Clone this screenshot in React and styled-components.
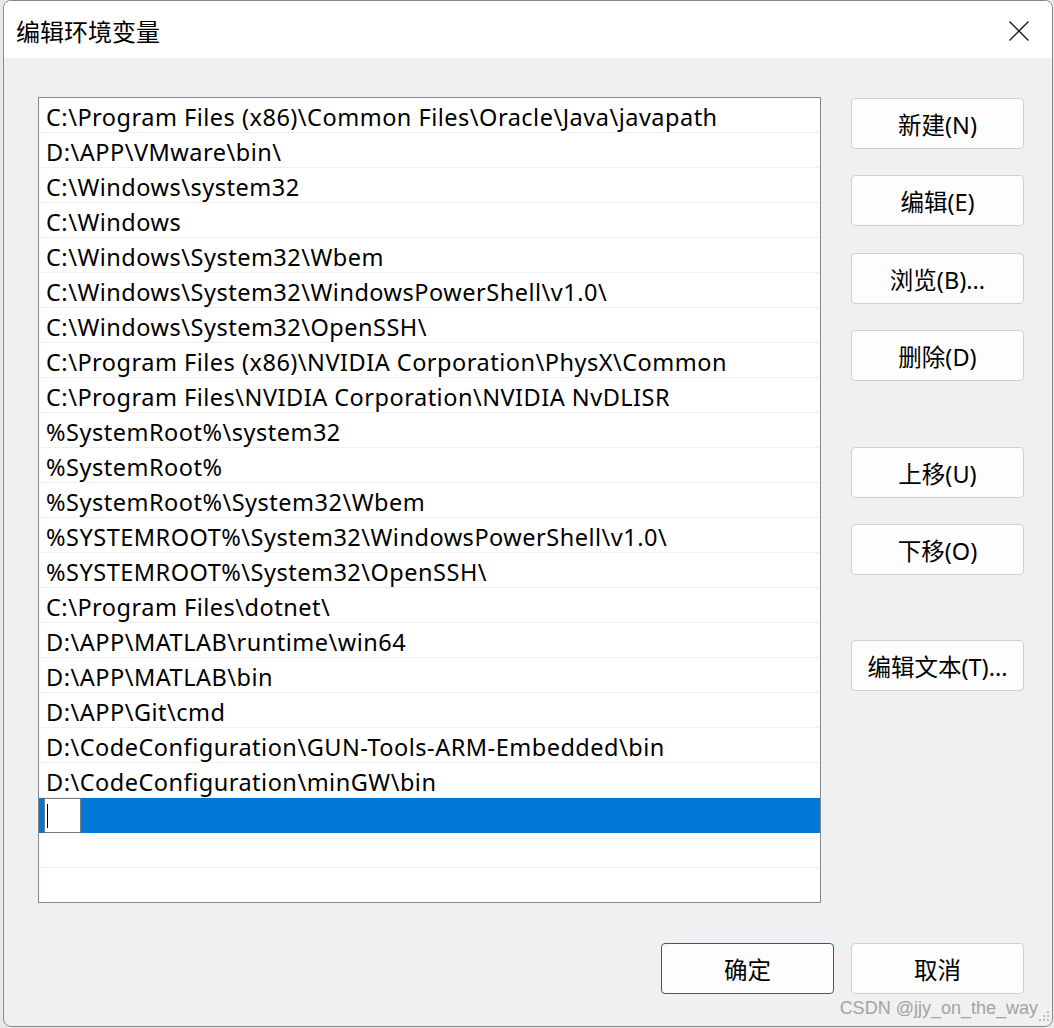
import React from 'react'
import styled, { createGlobalStyle } from 'styled-components'

const GlobalStyle = createGlobalStyle`
  html, body {
    margin: 0;
    padding: 0;
    height: 100%;
    overflow: hidden;
    background: #e9e9e9;
  }
  #root {
    height: 100%;
  }
`

const fonts = {
  ui: `"Noto Sans", "Noto Sans CJK SC", sans-serif`,
  cjk: `"Noto Sans CJK SC", "Noto Sans", sans-serif`,
}

const paths = [
  'C:\\Program Files (x86)\\Common Files\\Oracle\\Java\\javapath',
  'D:\\APP\\VMware\\bin\\',
  'C:\\Windows\\system32',
  'C:\\Windows',
  'C:\\Windows\\System32\\Wbem',
  'C:\\Windows\\System32\\WindowsPowerShell\\v1.0\\',
  'C:\\Windows\\System32\\OpenSSH\\',
  'C:\\Program Files (x86)\\NVIDIA Corporation\\PhysX\\Common',
  'C:\\Program Files\\NVIDIA Corporation\\NVIDIA NvDLISR',
  '%SystemRoot%\\system32',
  '%SystemRoot%',
  '%SystemRoot%\\System32\\Wbem',
  '%SYSTEMROOT%\\System32\\WindowsPowerShell\\v1.0\\',
  '%SYSTEMROOT%\\System32\\OpenSSH\\',
  'C:\\Program Files\\dotnet\\',
  'D:\\APP\\MATLAB\\runtime\\win64',
  'D:\\APP\\MATLAB\\bin',
  'D:\\APP\\Git\\cmd',
  'D:\\CodeConfiguration\\GUN-Tools-ARM-Embedded\\bin',
  'D:\\CodeConfiguration\\minGW\\bin',
]

const sideButtons = [
  { label: '新建(N)', gap: 0 },
  { label: '编辑(E)', gap: 26 },
  { label: '浏览(B)...', gap: 27 },
  { label: '删除(D)', gap: 26 },
  { label: '上移(U)', gap: 66 },
  { label: '下移(O)', gap: 26 },
  { label: '编辑文本(T)...', gap: 65 },
]

const Window = styled.div`
  position: relative;
  box-sizing: border-box;
  margin-left: 3px;
  width: 1050px;
  height: 1027px;
  background: #f0f0f0;
  border: 1px solid #8a8a8a;
  border-radius: 8px;
  overflow: hidden;
  display: flex;
  flex-direction: column;
`

const TitleBar = styled.div`
  height: 57px;
  flex: none;
  background: #ffffff;
  display: flex;
  align-items: center;
  justify-content: space-between;
  padding: 0 22px 0 12px;
`

const Title = styled.div`
  font-family: ${fonts.cjk};
  font-size: 24px;
  color: #000;
  margin-top: 2px;
`

const CloseIcon = styled.svg`
  width: 22px;
  height: 22px;
  display: block;
  margin-top: 2px;
`

const Body = styled.div`
  flex: 1;
  display: flex;
  flex-direction: column;
  padding: 39px 28px 0 34px;
`

const Main = styled.div`
  display: flex;
  gap: 30px;
`

const List = styled.div`
  box-sizing: border-box;
  width: 784px;
  height: 806px;
  border: 1px solid #828790;
  background: #fff;
  display: flex;
  flex-direction: column;
  overflow: hidden;
`

const Row = styled.div`
  flex: none;
  box-sizing: border-box;
  height: 35px;
  display: flex;
  align-items: center;
  padding: 3px 0 0 7px;
  border-bottom: 1px solid ${p => (p.$selected ? '#0078d7' : '#f0f0f0')};
  font-family: ${fonts.ui};
  font-size: 23.5px;
  letter-spacing: 0.5px;
  color: #000;
  white-space: nowrap;
  background: ${p => (p.$selected ? '#0078d7' : '#fff')};
`

const EditBox = styled.div`
  box-sizing: border-box;
  width: 37px;
  height: 35px;
  margin: -2px 0 0 -2px;
  background: #fff;
  border: 1px solid #7a7a7a;
  display: flex;
  align-items: center;
  padding-left: 2px;
`

const Caret = styled.div`
  width: 1px;
  height: 24px;
  background: #000;
`

const ButtonColumn = styled.div`
  display: flex;
  flex-direction: column;
  padding-top: 1px;
`

const Button = styled.button`
  box-sizing: border-box;
  width: 173px;
  height: 51px;
  margin-top: ${p => p.$gap || 0}px;
  padding: 1px 0 0;
  background: #fdfdfd;
  border: 1px solid ${p => (p.$primary ? '#0067c0' : '#d0d0d0')};
  border-radius: 4px;
  font-family: ${fonts.ui};
  font-size: 23.5px;
  color: #000;
  display: flex;
  align-items: center;
  justify-content: center;
`

const Footer = styled.div`
  display: flex;
  justify-content: flex-end;
  gap: 17px;
  margin-top: 40px;
`

const Watermark = styled.div`
  position: absolute;
  right: 14px;
  bottom: 7px;
  font-family: "Liberation Sans", Arial, sans-serif;
  font-size: 18px;
  color: #a3a3a3;
`

const Grip = styled.svg`
  position: absolute;
  right: 2px;
  bottom: 2px;
  width: 15px;
  height: 15px;
`

const App = () => (
  <>
    <GlobalStyle />
    <Window>
      <TitleBar>
        <Title>编辑环境变量</Title>
        <CloseIcon viewBox="0 0 22 22">
          <path d="M1.5 1.5 L20.5 20.5 M20.5 1.5 L1.5 20.5" stroke="#1a1a1a" strokeWidth="1.4" fill="none" />
        </CloseIcon>
      </TitleBar>
      <Body>
        <Main>
          <List>
            {paths.map(p => (
              <Row key={p}>{p}</Row>
            ))}
            <Row $selected>
              <EditBox>
                <Caret />
              </EditBox>
            </Row>
            <Row />
            <Row />
          </List>
          <ButtonColumn>
            {sideButtons.map(b => (
              <Button key={b.label} $gap={b.gap}>{b.label}</Button>
            ))}
          </ButtonColumn>
        </Main>
        <Footer>
          <Button $primary>确定</Button>
          <Button>取消</Button>
        </Footer>
      </Body>
      <Watermark>CSDN @jjy_on_the_way</Watermark>
      <Grip viewBox="0 0 15 15">
        {[[12, 2], [8, 6], [12, 6], [4, 10], [8, 10], [12, 10]].map(([x, y]) => (
          <rect key={`${x}-${y}`} x={x} y={y} width="2" height="2" fill="#bdbdbd" />
        ))}
      </Grip>
    </Window>
  </>
)

export default App
